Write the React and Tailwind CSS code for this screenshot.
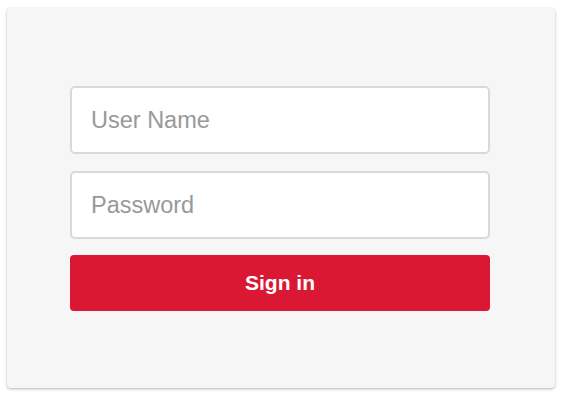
export default function App() {
  return (
    <div className="w-[563px] h-[401px] bg-white pt-[8px] pl-[7px] font-['Liberation_Sans',Arial,sans-serif]">
      <div className="w-[548px] h-[380px] bg-[#f6f6f6] rounded-[4px] shadow-[0_1px_3px_rgba(0,0,0,0.3)] pt-[78px] pl-[63px]">
        <form className="w-[420px] flex flex-col" onSubmit={e => e.preventDefault()}>
          <input
            type="text"
            placeholder="User Name"
            className="h-[68px] bg-white border-2 border-[#d9d9d9] rounded-[5px] px-[19px] text-[23.5px] text-[#333] placeholder:text-[#999] outline-none"
          />
          <input
            type="password"
            placeholder="Password"
            className="h-[68px] mt-[17px] bg-white border-2 border-[#d9d9d9] rounded-[5px] px-[19px] text-[23.5px] text-[#333] placeholder:text-[#999] outline-none"
          />
          <button
            type="submit"
            className="h-[56px] mt-[16px] bg-[#da1834] rounded-[4px] text-white font-bold text-[21px]"
          >
            Sign in
          </button>
        </form>
      </div>
    </div>
  )
}
